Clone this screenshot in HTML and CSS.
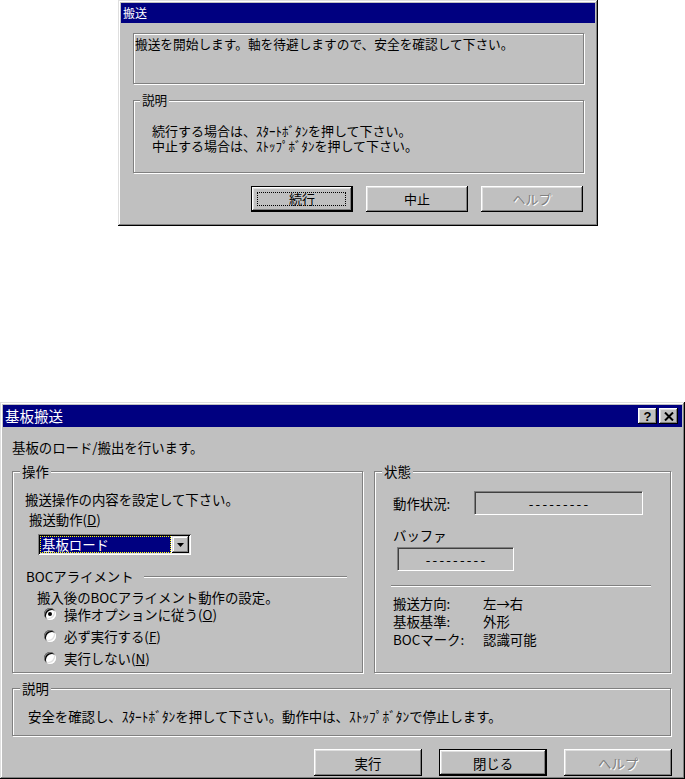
FILE: index.html
```html
<!DOCTYPE html>
<html lang="ja">
<head>
<meta charset="utf-8">
<title>基板搬送</title>
<link rel="stylesheet" href="styles.css">
</head>
<body>
<div class="page">

  <div class="win win-small">
    <div class="titlebar titlebar-small"><span class="title-text">搬送</span></div>
    <div class="small-body">
      <div class="etched msgframe">搬送を開始します。軸を待避しますので、安全を確認して下さい。</div>
      <fieldset class="group small-desc">
        <legend>説明</legend>
        <div class="small-desc-text">
          <div>続行する場合は、ｽﾀｰﾄﾎﾞﾀﾝを押して下さい。</div>
          <div>中止する場合は、ｽﾄｯﾌﾟﾎﾞﾀﾝを押して下さい。</div>
        </div>
      </fieldset>
      <div class="btnrow small-btns">
        <div class="btn btn-small default focused">続行</div>
        <div class="btn btn-small">中止</div>
        <div class="btn btn-small disabled">ヘルプ</div>
      </div>
    </div>
  </div>

  <div class="win win-main">
    <div class="titlebar titlebar-main">
      <span class="title-text">基板搬送</span>
      <div class="capbtns">
        <div class="capbtn help">?</div>
        <div class="capbtn close">
          <svg width="10" height="9" viewBox="0 0 10 9"><path d="M1 0.5 L9 8.5 M9 0.5 L1 8.5" stroke="#000" stroke-width="2" fill="none"/></svg>
        </div>
      </div>
    </div>
    <div class="main-body">
      <div class="intro">基板のロード/搬出を行います。</div>
      <div class="groups">
        <fieldset class="group op-group">
          <legend>操作</legend>
          <div class="op-content">
            <div class="line">搬送操作の内容を設定して下さい。</div>
            <div class="line op-label">搬送動作(<u>D</u>)</div>
            <div class="combo">
              <div class="combo-field"><span class="combo-sel">基板ロード</span></div>
              <div class="combo-btn">
                <svg width="7" height="4" viewBox="0 0 7 4"><path d="M0 0 H7 L3.5 4 Z" fill="#000"/></svg>
              </div>
            </div>
            <div class="boc-head">
              <span class="line">BOCアライメント</span>
              <span class="etch-h boc-line"></span>
            </div>
            <div class="line boc-desc">搬入後のBOCアライメント動作の設定。</div>
            <div class="radios">
              <div class="radio-row"><span class="radio checked"></span><span>操作オプションに従う(<u>O</u>)</span></div>
              <div class="radio-row"><span class="radio"></span><span>必ず実行する(<u>F</u>)</span></div>
              <div class="radio-row"><span class="radio"></span><span>実行しない(<u>N</u>)</span></div>
            </div>
          </div>
        </fieldset>
        <fieldset class="group st-group">
          <legend>状態</legend>
          <div class="st-content">
            <div class="st-row">
              <span class="st-label">動作状況:</span>
              <div class="field field-wide">---------</div>
            </div>
            <div class="line buf-label">バッファ</div>
            <div class="field field-buf">---------</div>
            <div class="etch-h st-sep"></div>
            <div class="info">
              <span>搬送方向:</span><span>左→右</span>
              <span>基板基準:</span><span>外形</span>
              <span>BOCマーク:</span><span>認識可能</span>
            </div>
          </div>
        </fieldset>
      </div>
      <fieldset class="group desc-group">
        <legend>説明</legend>
        <div class="desc-text">安全を確認し、ｽﾀｰﾄﾎﾞﾀﾝを押して下さい。動作中は、ｽﾄｯﾌﾟﾎﾞﾀﾝで停止します。</div>
      </fieldset>
      <div class="btnrow main-btns">
        <div class="btn btn-main">実行</div>
        <div class="btn btn-main default">閉じる</div>
        <div class="btn btn-main disabled">ヘルプ</div>
      </div>
    </div>
  </div>

</div>
</body>
</html>
```

FILE: styles.css
```css
* { box-sizing: border-box; }

html, body {
  margin: 0;
  padding: 0;
  background: #ffffff;
}

body {
  font-family: "Noto Sans CJK JP", "Noto Sans", sans-serif;
  font-size: 13.4px;
  line-height: 16px;
  color: #000;
}

.page {
  display: flex;
  flex-direction: column;
  width: 685px;
  height: 779px;
  overflow: hidden;
}

/* ---------- window frame ---------- */
.win {
  background: #c0c0c0;
  padding: 3px;
  display: flex;
  flex-direction: column;
  box-shadow:
    inset -1px -1px #000,
    inset 1px 1px #dfdfdf,
    inset -2px -2px #808080,
    inset 2px 2px #fff;
}

.win-small {
  margin-left: 118px;
  width: 480px;
  height: 226px;
}

.win-main {
  margin-top: 176px;
  width: 685px;
  height: 377px;
}

.titlebar {
  background: #000080;
  color: #fff;
  display: flex;
  align-items: center;
  flex: none;
}

.titlebar-small {
  height: 20px;
  padding-left: 2px;
  font-size: 12px;
  line-height: 20px;
}

.titlebar-main {
  height: 22px;
  padding-left: 2px;
  padding-right: 4px;
  font-size: 14.5px;
  line-height: 22px;
}

.capbtns {
  margin-left: auto;
  display: flex;
  gap: 2px;
}

.capbtn {
  width: 19px;
  height: 16px;
  background: #c0c0c0;
  color: #000;
  display: flex;
  align-items: center;
  justify-content: center;
  box-shadow:
    inset -1px -1px #000,
    inset 1px 1px #fff,
    inset -2px -2px #808080,
    inset 2px 2px #dfdfdf;
}

.capbtn.help {
  font-family: "Liberation Sans", Arial, sans-serif;
  font-weight: bold;
  font-size: 13px;
  line-height: 16px;
  padding-top: 1px;
}

.capbtn.close svg { display: block; }

/* ---------- etched frames / groups ---------- */
.etched,
.group {
  border: 1px solid #808080;
  box-shadow: inset 1px 1px #fff, 1px 1px #fff;
}

.group {
  margin: 0;
  padding: 0;
  min-width: 0;
}

.group legend {
  padding: 0 2px;
  margin-left: 7px;
  line-height: 16px;
  background: #c0c0c0;
}

.etch-h {
  display: block;
  height: 2px;
  border-top: 1px solid #808080;
  border-bottom: 1px solid #fff;
}

/* ---------- small dialog ---------- */
.small-body {
  padding: 10px 11px 0 12px;
  display: flex;
  flex-direction: column;
  font-size: 12.6px;
}

.msgframe {
  height: 51px;
  padding: 2px 1px;
  line-height: 15px;
  font-size: 12.7px;
}

.small-desc {
  margin-top: 8px;
}

.small-desc legend {
  margin-left: 6px;
  font-size: 12.6px;
}

.small-desc-text {
  padding: 15px 10px 19px 18px;
  line-height: 15px;
  font-size: 13px;
}

.btnrow {
  display: flex;
  justify-content: flex-end;
}

.small-btns {
  margin-top: 13px;
  gap: 13px;
  margin-right: 1px;
}

/* ---------- buttons ---------- */
.btn {
  position: relative;
  background: #c0c0c0;
  display: flex;
  align-items: center;
  justify-content: center;
  box-shadow:
    inset -1px -1px #000,
    inset 1px 1px #fff,
    inset -2px -2px #808080,
    inset 2px 2px #dfdfdf;
}

.btn.default {
  border: 1px solid #000;
}

.btn.disabled {
  color: #808080;
  text-shadow: 1px 1px #fff;
}

.btn.focused::after {
  content: "";
  position: absolute;
  left: 5px;
  right: 6px;
  top: 5px;
  bottom: 5px;
  border: 1px dotted #000;
}

.btn-small {
  width: 102px;
  height: 26px;
  font-size: 13px;
}

.btn-main {
  width: 108px;
  height: 27px;
}

/* ---------- main dialog ---------- */
.main-body {
  padding: 12px 11px 0 9px;
  display: flex;
  flex-direction: column;
}

.intro { line-height: 16px; }

.groups {
  display: flex;
  gap: 11px;
  margin-top: 8px;
}

.op-group { width: 351px; flex: none; }
.st-group { width: 297px; flex: none; }

.op-content {
  padding: 12px 15px 6px 12px;
  display: flex;
  flex-direction: column;
}

.line { line-height: 16px; }

.op-label {
  margin-top: 4px;
  padding-left: 4px;
}

.combo {
  margin-top: 7px;
  margin-left: 13px;
  width: 153px;
  height: 21px;
  padding: 2px;
  display: flex;
  background: #fff;
  box-shadow:
    inset 1px 1px #808080,
    inset -1px -1px #fff,
    inset 2px 2px #000,
    inset -2px -2px #dfdfdf;
}

.combo-field {
  flex: 1;
  display: flex;
  padding: 0 1px 0 0;
}

.combo-sel {
  flex: 1;
  background: #000080;
  color: #fff;
  line-height: 17px;
  padding-left: 2px;
  outline: 1px dotted #ffff00;
  outline-offset: -1px;
}

.combo-btn {
  width: 17px;
  background: #c0c0c0;
  display: flex;
  align-items: center;
  justify-content: center;
  box-shadow:
    inset -1px -1px #000,
    inset 1px 1px #dfdfdf,
    inset -2px -2px #808080,
    inset 2px 2px #fff;
}

.combo-btn svg { display: block; }

.boc-head {
  margin-top: 13px;
  padding-left: 1px;
  display: flex;
  align-items: center;
}

.boc-line {
  flex: 1;
  margin-left: 10px;
  margin-top: 1px;
}

.boc-desc {
  margin-top: 5px;
  padding-left: 12px;
}

.radios {
  margin-top: 1px;
  padding-left: 19px;
  display: flex;
  flex-direction: column;
  gap: 6px;
}

.radio-row {
  display: flex;
  align-items: center;
  gap: 8px;
  height: 16px;
}

.radio {
  position: relative;
  width: 12px;
  height: 12px;
  border-radius: 50%;
  background: #fff;
  flex: none;
  box-shadow:
    inset 1px 1px #808080,
    inset -1px -1px #fff,
    inset 2px 2px #000,
    inset -2px -2px #dfdfdf;
}

.radio.checked::after {
  content: "";
  position: absolute;
  left: 4px;
  top: 4px;
  width: 4px;
  height: 4px;
  border-radius: 50%;
  background: #000;
}

/* status group */
.st-content {
  padding: 12px 18px 6px 18px;
  display: flex;
  flex-direction: column;
}

.st-row {
  display: flex;
  align-items: center;
}

.st-label { width: 81px; }

.field {
  height: 24px;
  border: 1px solid;
  border-color: #808080 #fff #fff #808080;
  box-shadow: inset 1px 1px #404040;
  display: flex;
  align-items: center;
  justify-content: center;
  letter-spacing: 2.2px;
  padding-left: 2px;
}

.field-wide { width: 169px; }

.buf-label { margin-top: 12px; }

.field-buf {
  margin-top: 4px;
  margin-left: 4px;
  width: 117px;
}

.st-sep {
  margin-top: 14px;
  margin-left: -2px;
  width: 260px;
}

.info {
  margin-top: 7px;
  display: grid;
  grid-template-columns: 90px auto;
  line-height: 18px;
}

/* description */
.desc-group {
  margin-top: 7px;
}

.desc-text {
  padding: 12px 10px 11px 15px;
  line-height: 16px;
}

.main-btns {
  margin-top: 13px;
  gap: 17px;
  margin-right: -1px;
}
```
